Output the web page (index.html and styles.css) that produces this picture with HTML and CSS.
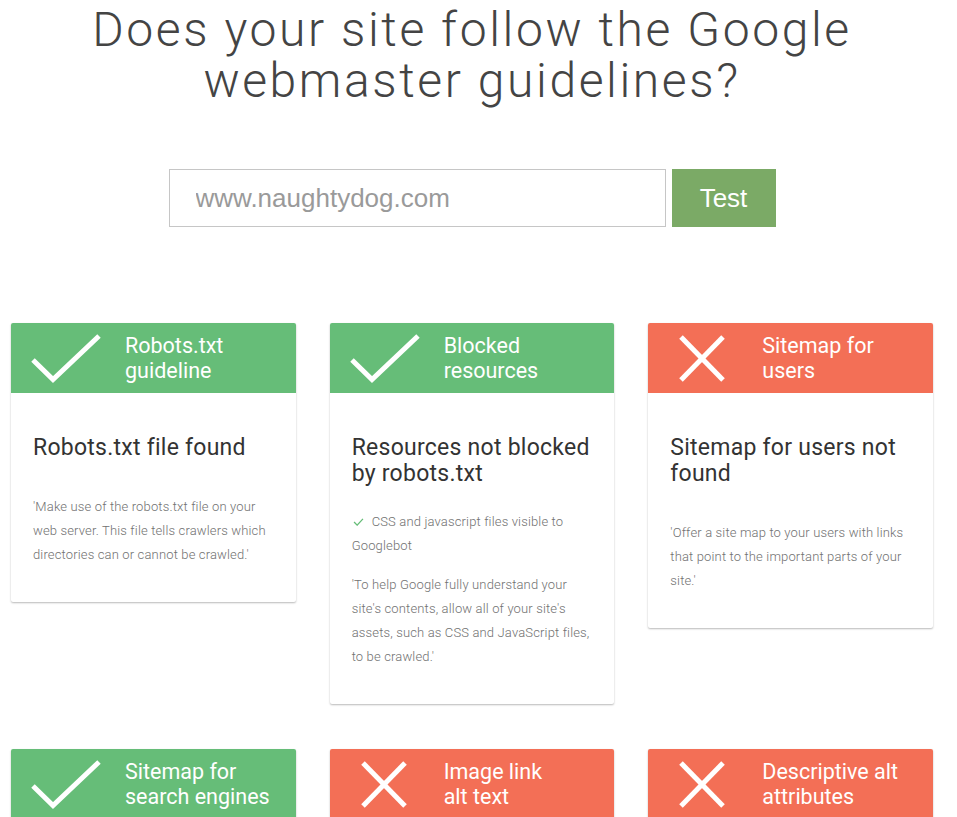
FILE: index.html
```html
<!DOCTYPE html>
<html lang="en">
<head>
<meta charset="utf-8">
<title>Google webmaster guidelines test</title>
<link rel="stylesheet" href="styles.css">
</head>
<body>
<main class="page">
  <h1 class="title">Does your site follow the Google webmaster guidelines?</h1>

  <form class="search">
    <input class="search-input" type="text" placeholder="www.naughtydog.com">
    <button class="search-btn" type="button">Test</button>
  </form>

  <section class="cards">
    <article class="card">
      <header class="card-head pass">
        <svg class="icon" viewBox="0 0 70 50"><polyline points="2,27 22,46.5 68,3"/></svg>
        <h2 class="card-label">Robots.txt<br>guideline</h2>
      </header>
      <div class="card-body">
        <h3 class="card-title">Robots.txt file found</h3>
        <p class="card-text">'Make use of the robots.txt file on your web server. This file tells crawlers which directories can or cannot be crawled.'</p>
      </div>
    </article>

    <article class="card">
      <header class="card-head pass">
        <svg class="icon" viewBox="0 0 70 50"><polyline points="2,27 22,46.5 68,3"/></svg>
        <h2 class="card-label">Blocked<br>resources</h2>
      </header>
      <div class="card-body">
        <h3 class="card-title">Resources not blocked by robots.txt</h3>
        <p class="card-check"><svg class="mini-check" viewBox="0 0 12 9"><polyline points="1,4.5 4.5,8 11,1"/></svg>CSS and javascript files visible to Googlebot</p>
        <p class="card-text after-check">'To help Google fully understand your site's contents, allow all of your site's assets, such as CSS and JavaScript files, to be crawled.'</p>
      </div>
    </article>

    <article class="card">
      <header class="card-head fail">
        <svg class="icon" viewBox="0 0 70 50"><line x1="13" y1="4" x2="55" y2="47"/><line x1="55" y1="4" x2="13" y2="47"/></svg>
        <h2 class="card-label">Sitemap for<br>users</h2>
      </header>
      <div class="card-body">
        <h3 class="card-title">Sitemap for users not found</h3>
        <p class="card-text">'Offer a site map to your users with links that point to the important parts of your site.'</p>
      </div>
    </article>

    <article class="card">
      <header class="card-head pass">
        <svg class="icon" viewBox="0 0 70 50"><polyline points="2,27 22,46.5 68,3"/></svg>
        <h2 class="card-label">Sitemap for<br>search engines</h2>
      </header>
      <div class="card-body">
        <h3 class="card-title">Sitemap for search engines found</h3>
        <p class="card-text">'Submit a sitemap to Google so that its crawlers can find all of your pages.'</p>
      </div>
    </article>

    <article class="card">
      <header class="card-head fail">
        <svg class="icon" viewBox="0 0 70 50"><line x1="13" y1="4" x2="55" y2="47"/><line x1="55" y1="4" x2="13" y2="47"/></svg>
        <h2 class="card-label">Image link<br>alt text</h2>
      </header>
      <div class="card-body">
        <h3 class="card-title">Image links without alt text</h3>
        <p class="card-text">'If you use images as links, give them alt text.'</p>
      </div>
    </article>

    <article class="card">
      <header class="card-head fail">
        <svg class="icon" viewBox="0 0 70 50"><line x1="13" y1="4" x2="55" y2="47"/><line x1="55" y1="4" x2="13" y2="47"/></svg>
        <h2 class="card-label">Descriptive alt<br>attributes</h2>
      </header>
      <div class="card-body">
        <h3 class="card-title">Alt attributes not descriptive</h3>
        <p class="card-text">'Make sure that your alt attributes are descriptive and accurate.'</p>
      </div>
    </article>
  </section>
</main>
</body>
</html>
```

FILE: styles.css
```css
* { box-sizing: border-box; }

html, body {
  margin: 0;
  padding: 0;
  background: #ffffff;
}

body {
  font-family: Roboto, "Noto Sans", sans-serif;
  color: #333333;
}

.page {
  width: 922px;
  margin-left: 11px;
  padding-top: 4px;
}

.title {
  margin: 0;
  text-align: center;
  font-family: Roboto, sans-serif;
  font-weight: 300;
  font-size: 48px;
  line-height: 51px;
  letter-spacing: 2.6px;
  color: #444444;
  padding: 0 60px;
}

.search {
  display: flex;
  justify-content: center;
  gap: 6px;
  margin-top: 63px;
}

.search-input {
  width: 497px;
  height: 58px;
  border: 1px solid #c6c6c6;
  padding: 0 0 0 26px;
  font-family: "Liberation Sans", Arial, sans-serif;
  font-size: 26px;
  color: #555555;
  outline: none;
  border-radius: 0;
}

.search-input::placeholder {
  color: #9a9a9a;
}

.search-btn {
  width: 104px;
  height: 58px;
  border: 0;
  border-radius: 0;
  background: #7baa66;
  color: #ffffff;
  font-family: "Liberation Sans", Arial, sans-serif;
  font-size: 26px;
  padding: 0;
  cursor: pointer;
}

.cards {
  display: grid;
  grid-template-columns: repeat(3, 1fr);
  column-gap: 34px;
  row-gap: 45px;
  align-items: start;
  margin-top: 96px;
}

.card {
  background: #ffffff;
  box-shadow: 0 1px 2px rgba(0, 0, 0, 0.28);
  border-radius: 2px;
  overflow: hidden;
}

.card-head {
  height: 70px;
  display: flex;
  align-items: center;
  padding-left: 20px;
  gap: 24px;
}

.card-head.pass { background: #66bd78; }
.card-head.fail { background: #f36f56; }

.icon {
  width: 70px;
  height: 50px;
  flex: none;
  fill: none;
  stroke: #ffffff;
  stroke-width: 5;
}

.card-label {
  margin: 0;
  font-family: Roboto, sans-serif;
  font-weight: 400;
  font-size: 21.5px;
  line-height: 25px;
  color: #ffffff;
  white-space: nowrap;
}

.card-body {
  padding: 42px 16px 35px 22px;
}

.card-title {
  margin: 0;
  font-family: Roboto, sans-serif;
  font-weight: 400;
  font-size: 23px;
  line-height: 26px;
  letter-spacing: 0.25px;
  color: #333333;
}

.card-text {
  margin: 34px 0 0 0;
  font-family: Roboto, sans-serif;
  font-weight: 300;
  font-size: 13px;
  line-height: 24px;
  letter-spacing: 0.15px;
  color: #717171;
}

.card-text.after-check {
  margin-top: 15px;
}

.card-check {
  margin: 23px 0 0 0;
  font-family: Roboto, sans-serif;
  font-weight: 300;
  font-size: 13px;
  line-height: 24px;
  letter-spacing: 0.15px;
  color: #717171;
}

.mini-check {
  width: 11px;
  height: 8px;
  margin: 0 8px 0 1px;
  fill: none;
  stroke: #66bd78;
  stroke-width: 1.5;
}
```
